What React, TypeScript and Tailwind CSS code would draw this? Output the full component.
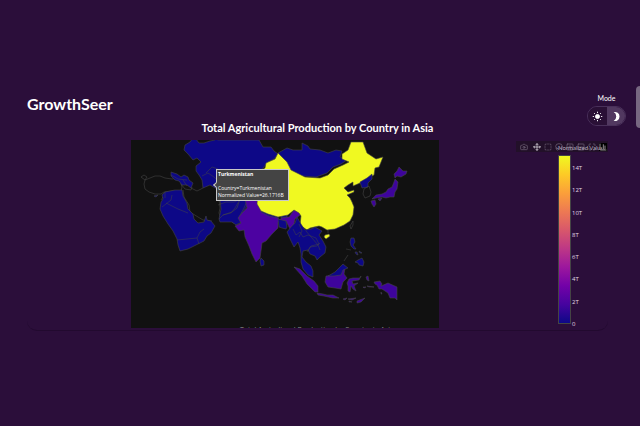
import { Camera, Move, SquareDashed, Lasso, SquarePlus, SquareMinus, Maximize, ChartColumn } from "lucide-react";

type Shape = { name: string; d: string; fill: string };

const BLUE = "#0d0887";
const INDIGO = "#3e049c";
const PURPLE = "#4c02a1";
const YELLOW = "#f0f921";

const shapes: Shape[] = [
  { name: "Turkey", fill: "none", d: "M141 177l3-2 3 2-2 3 5-2 5-2 5 0 5 2 7 1 5-1 3 3 2 6-1 4-9 0-8 1-3 2-6 0-6-2-4-3-1-5 1-4z" },
  { name: "Iran", fill: "none", d: "M181 184l4 5 6 1 1-3M183 190l1 7 5 8 1 7 8 5 5 3 9 1M191 188l6 3 6-3M219 200l1 8-1 5 3 8" },
  { name: "Cyprus", fill: BLUE, d: "M154 196l4-1-2 2z" },
  { name: "Arabia", fill: BLUE, d: "M182 190l-7 0-10 2-3 3 1 4-2 3-1 7 3 7 5 8 5 7 4 8 1 6 2 6 8-2 10-5 6-3 3-5 4-3 4-7-4-5-4-1-1-4-2 6-6 1-4-4-1-5-5-5-1-6-4-7z" },
  { name: "Caucasus", fill: BLUE, d: "M171 172l6 2 4 3 3-2 4 2 1 3 4 3-2 5-4-3-5 0-3-4-4-1-4-4z" },
  { name: "Central Asia", fill: BLUE, d: "M218 140h41l4 7 8 0 3 4 4 3-4 5-6 3-5 6-2 3 2 14 1 14-5 1-9 2-3 4-6 9-3 8-5 0-3-4-11 0 2-10-1-10-3-10-7-4-7 3-1-8-3-5-3-4 0-5 5-4-4-4-4 2-5-6-4-4 1-5 5-3 3-4 3 1 3 4 5 0 6-2 5-1-2-3z" },
  { name: "Pakistan", fill: BLUE, d: "M240 199l7 2-3 7-5 9 3 5-6 3-4-3-12 0-1-3 4-4 9-3 5-4z" },
  { name: "India", fill: PURPLE, d: "M245 199l13 1 0 5 4 6 9 4 6 2 3 3 2-3 7 0 5-7 5 2 1 3-5 4-1 5-4 5-2-4-2-4-5 0-3 1 0 6-6 6-6 7-4 2-1 8-1 7-4 4-4-8-3-8-4-9-1-7-5 1-4-5 6-3-3-5 4-5 5-5z" },
  { name: "Sri Lanka", fill: BLUE, d: "M261 258l3 3 0 4-3 1-1-5z" },
  { name: "Nepal", fill: BLUE, d: "M261 209l10 4 8 2-1 3-9-2-8-4zM281 216l6-1 0 2-6 1z" },
  { name: "Bangladesh", fill: BLUE, d: "M278 219l4 1 4 1 1 6-1 2-4-1-3-1z" },
  { name: "Mongolia", fill: BLUE, d: "M278 153l9-5 6 2 9 0 0-7 6 3 2 3 10 1 8 3 8-3 6 1-2 6 7 3-6 4-8 3-6 6-11 4-14-1-14-7-4-7-5-6z" },
  { name: "China", fill: YELLOW, d: "M278 153l-3 6-9 4-1 5-5 3-2 18-1 15 4 7 7 3 10 3 10-2 6-5 5 3 2 3-1 9 7 5 3-2 9-2 3 1 5 3 8-1 9-4 6-4 3-6 1-8-2-5-2-4-3-3 7-3 0-2-6 2-4-4 4-3 5-3 0 4 7-3 8-5 6-3 1-7 4-1 4-10-7 2-9-6-4-11h-12l-3 8-6 4 0 5 7 3-6 3-9 4-6 6-8 3-15-1-14-7-4-8z" },
  { name: "Hainan", fill: YELLOW, d: "M325 235l4-1 1 2-4 3-2-2zM328 230l0 3" },
  { name: "North Korea", fill: BLUE, d: "M360 182l7-4 5-4 0 5-4 4 0 4-6 1z" },
  { name: "South Korea", fill: "none", d: "M364 189l5-3 2 6-1 4-5 2-2-4z" },
  { name: "Taiwan", fill: "none", d: "M353 221l0 4-2 4-1-3z" },
  { name: "Japan", fill: INDIGO, d: "M399 167l4 4 4 0-1 3-5 3-4-1-2 2-1-4 3-3zM395 179l3 3-1 7-2 3-1 5-4 0-4 1-4-1-6 1-4 1 4-4 6-1 4-2 2-3 4-2 2-5zM371 201l4-1 1 4-2 3-2-3zM378 199l4-1-2 3z" },
  { name: "Indochina", fill: BLUE, d: "M297 217l4 7 4 6 6-1 4-2 7 4-3 4 4 6 3 6-1 6-5 4-3 3-2-4-5-2-2-4-5 1-1 6 4 5 5 4 2 5 0 6-5-2-5-6-2-7 0-8-1-6-2-6-4 5-3-6-4-9 4-5 4-4z" },
  { name: "Sumatra", fill: INDIGO, d: "M294 267l6 2 7 7 7 5 4 5 0 6-3 0-8-8-5-8z" },
  { name: "Java", fill: INDIGO, d: "M317 293l6 1 4 1 6 0 6 3-6 0-9-2-6-1zM343 299l4-1-2 2zM348 299l8-1-4 2zM349 301l3 1-3 0zM357 301l8-3-4 4-4 1z" },
  { name: "Kalimantan", fill: INDIGO, d: "M326 276l9-1 5-5 5-2-1 6 3 4-4 4-2 7-6-1-7-1-3-5z" },
  { name: "Malaysian Borneo", fill: BLUE, d: "M328 276l7-4 4-4 4-4 5 4-5 2-2 5-7 1z" },
  { name: "Sulawesi", fill: INDIGO, d: "M349 279l4-1 7 0 1-2-2 4-7 1 1 3 5-1-4 3 2 5-3-2-2-3-1 6-2-1 0-5-1-3z" },
  { name: "Moluccas", fill: INDIGO, d: "M366 277l2-1 1 5-2-1zM363 287l3 0-2 1zM367 286l7 1-5 0zM381 292l1 2-1 0z" },
  { name: "Papua", fill: INDIGO, d: "M374 282l6-1 2 3-1 2 7-3 9 4v13l-2-2-5 0-2-5-6-4-3 0-2-4-2-1z" },
  { name: "Philippines", fill: BLUE, d: "M351 238l3 0 1 4-2 3 3 4-2 0-3-3-1-4zM355 252l2 0 1 3-2-1zM359 251l3 2-2 0zM344 261l4-6M355 262l3-2 4-2 2 4-1 4-4-1-1-2z" },
];

const borders =
  "M162 207l4-3 5-4 1-5M166 203l12 6 10 4M177 240l10-1 10-1 3-6 4-3M197 238l2 6M161 200l2-3M165 192l0 6M171 175l7 4 9 1M183 180l4 6M206 173l6-6 6 2 5 5 10 2 8-3 12-3 10-1M202 176l6-3 6 4 6 6M218 205l8-3 8 0 7-3M223 215l8-2 4-5 4-7M293 229l3 6 4-3 3 5 5-2 8 3 3 6-8 2-4 6M299 224l3 7-3 6M306 231l6 7 6 7 2 5M308 251l2-4 7-1 3-3M346 249l5 1";

function MapChart() {
  return (
    <div className="relative min-w-0 self-start bg-[#111111]">
      <svg viewBox="131 140 308 188" className="block w-full" role="img" aria-label="Choropleth map of Asia">
        {shapes.map((s) => (
          <path key={s.name} d={s.d} fill={s.fill} stroke="#444444" strokeWidth="0.6" strokeLinejoin="round" />
        ))}
        <path d={borders} fill="none" stroke="#444444" strokeWidth="0.5" />
      </svg>
      <div className="absolute left-[85px] top-[29px] min-w-[73px] border border-[#c8c8c8] bg-[#444444] py-px pl-px font-['Open_Sans','Liberation_Sans',sans-serif] text-[5px] leading-[7px] whitespace-nowrap text-white">
        <i className="absolute -left-[3px] top-[13px] size-1 rotate-45 border-b border-l border-[#c8c8c8] bg-[#444444]" />
        <b>Turkmenistan</b>
        <br />
        <br />
        Country=Turkmenistan
        <br />
        Normalized Value=26.1716B
      </div>
      <div className="absolute inset-x-0 bottom-0 h-[2px] overflow-hidden pl-[109px] font-['Open_Sans',sans-serif] text-[7px] leading-[7px] whitespace-nowrap text-[#8b8b8b]">
        Total Agricultural Production by Country in Asia
      </div>
    </div>
  );
}

const ticks = ["14T", "12T", "10T", "8T", "6T", "4T", "2T", "0"];
const tools = [
  { label: "Download plot", Icon: Camera, style: "mr-[5px] text-[#77697e]" },
  { label: "Pan", Icon: Move, style: "mr-[3px] text-[#f0ecf2]" },
  { label: "Box select", Icon: SquareDashed, style: "mr-[3px] text-[#77697e]" },
  { label: "Lasso select", Icon: Lasso, style: "mr-[3px] text-[#77697e]" },
  { label: "Zoom in", Icon: SquarePlus, style: "mr-[3px] text-[#77697e]" },
  { label: "Zoom out", Icon: SquareMinus, style: "mr-[3px] text-[#77697e]" },
  { label: "Autoscale", Icon: Maximize, style: "mr-[3px] text-[#77697e]" },
  { label: "Produced with Plotly", Icon: ChartColumn, style: "bg-black text-[#d8d0d8]" },
];

function ColorBar() {
  return (
    <div className="relative min-w-0 pl-[119px] font-['Open_Sans',sans-serif] text-[#e0d9e4]">
      <div className="absolute right-0 top-px flex h-[11px] w-[92px] items-center bg-[#221029] pl-1">
        {tools.map(({ label, Icon, style }) => (
          <button key={label} aria-label={label} className={style}>
            <Icon size={8} strokeWidth={2} />
          </button>
        ))}
      </div>
      <div className="relative h-[15px] pt-[3px] font-['Lato',sans-serif] text-[6px] leading-[10px] whitespace-nowrap text-[#b9aebf]">Normalized Valu…</div>
      <div className="flex gap-px">
        <div className="h-[169px] w-[13px] border border-[#444444] bg-[linear-gradient(to_top,#0d0887,#46039f,#7201a8,#9c179e,#bd3786,#d8576b,#ed7953,#fb9f3a,#fdca26,#f0f921)]" />
        <ul className="-mb-1 flex h-[164px] flex-col justify-between self-end text-[6px] leading-[8px]">
          {ticks.map((t) => (
            <li key={t}>{t}</li>
          ))}
        </ul>
      </div>
    </div>
  );
}

export default function App() {
  return (
    <main className="relative min-h-screen bg-[#2b0e3a] pt-[93px] font-['Lato',sans-serif] text-white">
      <header className="flex h-[28px] justify-between pl-[27px] pr-[14px]">
        <h1 className="text-[16px] leading-[22px] font-bold">GrowthSeer</h1>
        <div className="flex flex-col items-center gap-[3px]">
          <span id="mode" className="text-[7px] leading-[10px]">Mode</span>
          <div role="group" aria-labelledby="mode" className="flex h-5 w-[39px] shrink-0 overflow-hidden rounded-full border border-[#49305a]">
            <button aria-label="Light mode" className="flex flex-1 items-center justify-center bg-[#2a1036]">
              <svg viewBox="0 0 12 12" className="size-[11px]" fill="white" stroke="white" strokeWidth="1">
                <circle cx="6" cy="6" r="2.2" />
                <path d="M6 .8v1.4M6 9.8v1.4M.8 6h1.4M9.8 6h1.4M2.3 2.3l1 1M8.7 8.7l1 1M9.7 2.3l-1 1M3.3 8.7l-1 1" />
              </svg>
            </button>
            <button aria-label="Dark mode" className="flex flex-1 items-center justify-center bg-[#513860]">
              <svg viewBox="0 0 12 12" className="size-[11px]" fill="white">
                <path d="M4 1.2a5 5 0 1 1 0 9.6a5.5 5.5 0 0 0 0-9.6z" />
              </svg>
            </button>
          </div>
        </div>
      </header>
      <section className="ml-[27px] mr-[32px] rounded-b-[10px] border-b border-[#220a2f] pb-[2px]">
        <h2 className="h-[19px] text-center text-[11px] leading-[13px] font-bold whitespace-nowrap">
          Total Agricultural Production by Country in Asia
        </h2>
        <div className="grid grid-cols-[308fr_169fr] pl-[104px]">
          <MapChart />
          <ColorBar />
        </div>
      </section>
      <div aria-hidden="true" className="absolute right-0 top-[86px] h-[42px] w-1 rounded-l-sm bg-[#776781]" />
    </main>
  );
}
